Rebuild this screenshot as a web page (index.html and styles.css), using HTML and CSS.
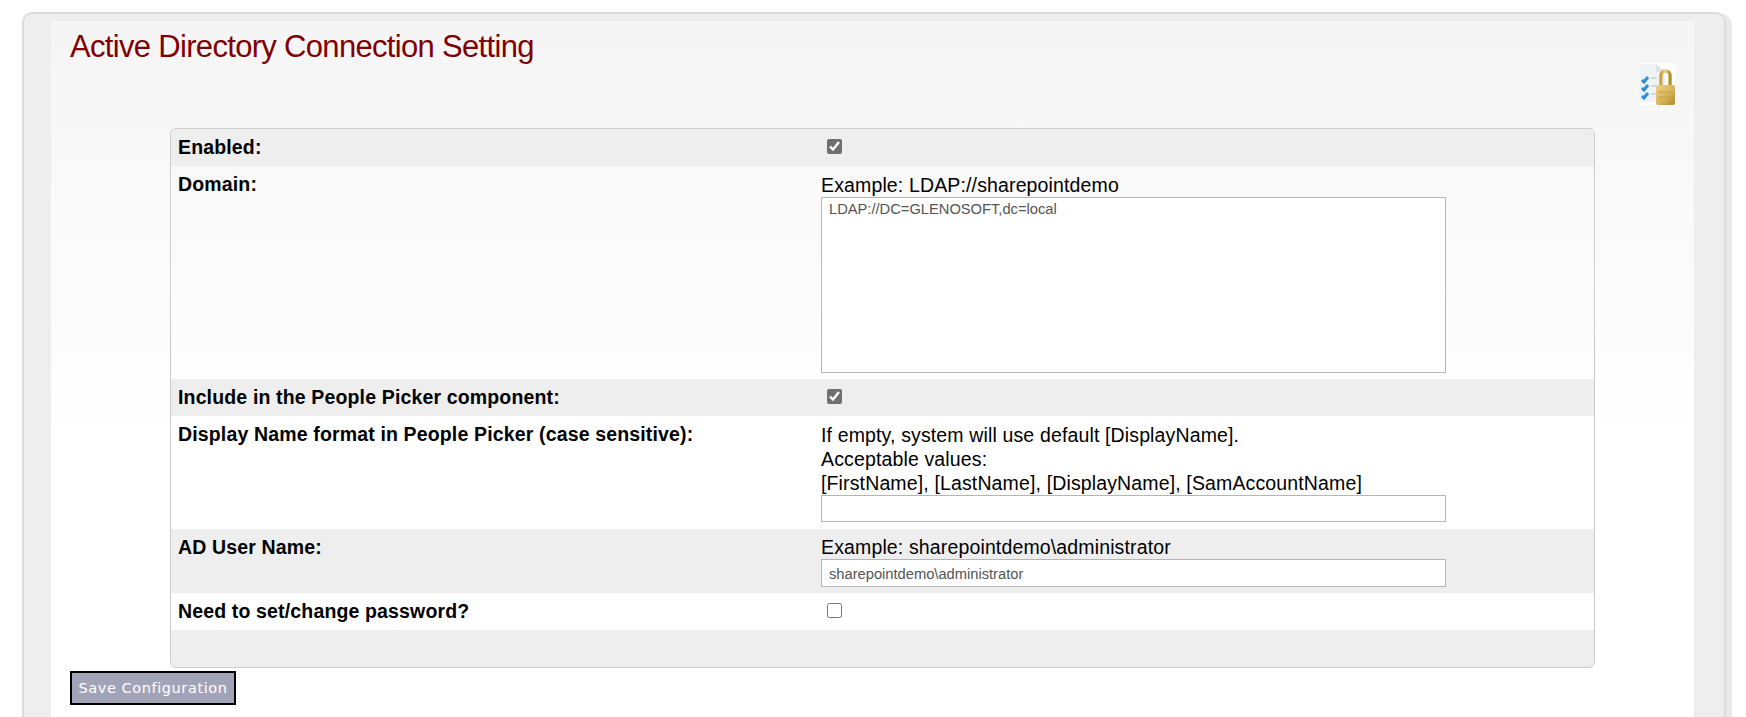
FILE: index.html
```html
<!DOCTYPE html>
<html lang="en">
<head>
<meta charset="utf-8">
<title>Active Directory Connection Setting</title>
<link rel="stylesheet" href="styles.css">
</head>
<body>
<div class="panel">
  <main class="inner">
    <header class="head">
      <h1 class="title">Active Directory Connection Setting</h1>
      <svg class="lock" width="37" height="42" viewBox="0 0 37 42" aria-hidden="true">
        <defs>
          <linearGradient id="gold" x1="0" y1="0" x2="1" y2="1">
            <stop offset="0" stop-color="#ecd488"/>
            <stop offset="0.55" stop-color="#d8b45a"/>
            <stop offset="1" stop-color="#b08a30"/>
          </linearGradient>
          <linearGradient id="shackle" x1="0" y1="0" x2="1" y2="0">
            <stop offset="0" stop-color="#c9a040"/>
            <stop offset="0.5" stop-color="#eed688"/>
            <stop offset="1" stop-color="#b08a2c"/>
          </linearGradient>
          <filter id="soft"><feGaussianBlur stdDeviation="0.6"/></filter>
        </defs>
        <rect width="37" height="42" fill="#fff"/>
        <g filter="url(#soft)">
          <path d="M1 1H18L27 9V39H1Z" fill="#eff2f7"/>
          <path d="M18 1L27 9H18Z" fill="#dde1e8"/>
          <path d="M4 17l2 2 4-5M4 25l2 2 4-5M4 33l2 2 4-5" fill="none" stroke="#2f8ed2" stroke-width="3"/>
          <path d="M13 15h6M13 23h6M13 31h6" stroke="#bcc1c9" stroke-width="1.2"/>
          <path d="M23 23V12.500a4.500 4.500 0 0 1 9 0V23" fill="none" stroke="url(#shackle)" stroke-width="3.400"/>
          <rect x="18" y="22" width="19" height="20" rx="2" fill="url(#gold)"/>
          <path d="M20 29h15M20 34h15" stroke="#c29f45" stroke-width="1"/>
        </g>
      </svg>
    </header>
    <form class="form">
      <div class="row alt">
        <label class="label">Enabled:</label>
        <div class="value"><input class="check" type="checkbox" checked></div>
      </div>
      <div class="row domain">
        <label class="label">Domain:</label>
        <div class="value">
          <div class="hint">Example: LDAP://sharepointdemo</div>
          <textarea class="field area">LDAP://DC=GLENOSOFT,dc=local</textarea>
        </div>
      </div>
      <div class="row alt">
        <label class="label">Include in the People Picker component:</label>
        <div class="value"><input class="check" type="checkbox" checked></div>
      </div>
      <div class="row plain display">
        <label class="label">Display Name format in People Picker (case sensitive):</label>
        <div class="value">
          <div class="hint">If empty, system will use default [DisplayName].</div>
          <div class="hint">Acceptable values:</div>
          <div class="hint">[FirstName], [LastName], [DisplayName], [SamAccountName]</div>
          <input class="field line" type="text">
        </div>
      </div>
      <div class="row alt user">
        <label class="label">AD User Name:</label>
        <div class="value">
          <div class="hint">Example: sharepointdemo\administrator</div>
          <input class="field line" type="text" value="sharepointdemo\administrator">
        </div>
      </div>
      <div class="row plain">
        <label class="label">Need to set/change password?</label>
        <div class="value"><input class="check" type="checkbox"></div>
      </div>
      <div class="row alt foot"></div>
    </form>
    <button class="save" type="button">Save Configuration</button>
  </main>
</div>
</body>
</html>
```
FILE: styles.css
```css
* { box-sizing: border-box; }
html, body { margin: 0; height: 717px; overflow: hidden; background: #fff; }
body { font-family: "Liberation Sans", Arial, sans-serif; font-size: 19.5px; color: #000; }
.panel {
  height: 705px;
  margin: 12px 20px 0 22px;
  padding: 7px 30px 0 27px;
  background: #eee;
  border: 2px solid #dcdcdc;
  border-bottom: 0;
  border-radius: 10px 10px 0 0;
  box-shadow: 6px 2px 0 #e9e9e9;
}
.inner {
  height: 100%;
  padding-left: 119px;
  padding-right: 99px;
  background: linear-gradient(#f5f5f5 0, #ffffff 430px);
}
.head { position: relative; height: 107px; }
.title {
  margin: 0 0 0 -100px;
  padding-top: 8px;
  font-size: 31px;
  line-height: 36px;
  font-weight: 400;
  letter-spacing: -0.68px;
  color: #800000;
}
.lock { position: absolute; top: 42px; right: -80px; }
.form {
  border: 1px solid #ccc;
  border-radius: 6px;
  overflow: hidden;
}
.row {
  display: grid;
  grid-template-columns: 650px 1fr;
  min-height: 37px;
  align-items: start;
}
.alt { background: #eee; }
.plain { background: #fff; }
.domain { height: 213px; }
.display { height: 113px; }
.user { height: 64px; }
.label { padding: 7px 0 0 7px; font-weight: 700; line-height: 22px; letter-spacing: 0.15px; }
.value { padding-top: 6px; }
.hint { line-height: 24px; letter-spacing: 0.14px; }
.domain .value, .display .value { padding-top: 7px; }
.check {
  display: block;
  width: 15px;
  height: 15px;
  margin: 4px 0 0 6px;
  accent-color: #6f6f6f;
}
.field {
  display: block;
  width: 625px;
  border: 1px solid #b5b5b5;
  background: #fff;
  font-family: "Liberation Sans", Arial, sans-serif;
  font-size: 14.7px;
  color: #555;
  padding: 3px 7px;
  border-radius: 0;
  outline: 0;
}
.area { height: 176px; resize: none; }
.line { height: 27px; padding-top: 4px; }
.user .line { height: 28px; }
.save {
  display: block;
  margin: 3px 0 0 -100px;
  width: 166px;
  height: 34px;
  padding: 0;
  background: #a3a3b8;
  border: 2px solid #000;
  color: #fff;
  font-family: "DejaVu Sans", Verdana, sans-serif;
  font-size: 14.5px;
  letter-spacing: 0.58px;
}
```
